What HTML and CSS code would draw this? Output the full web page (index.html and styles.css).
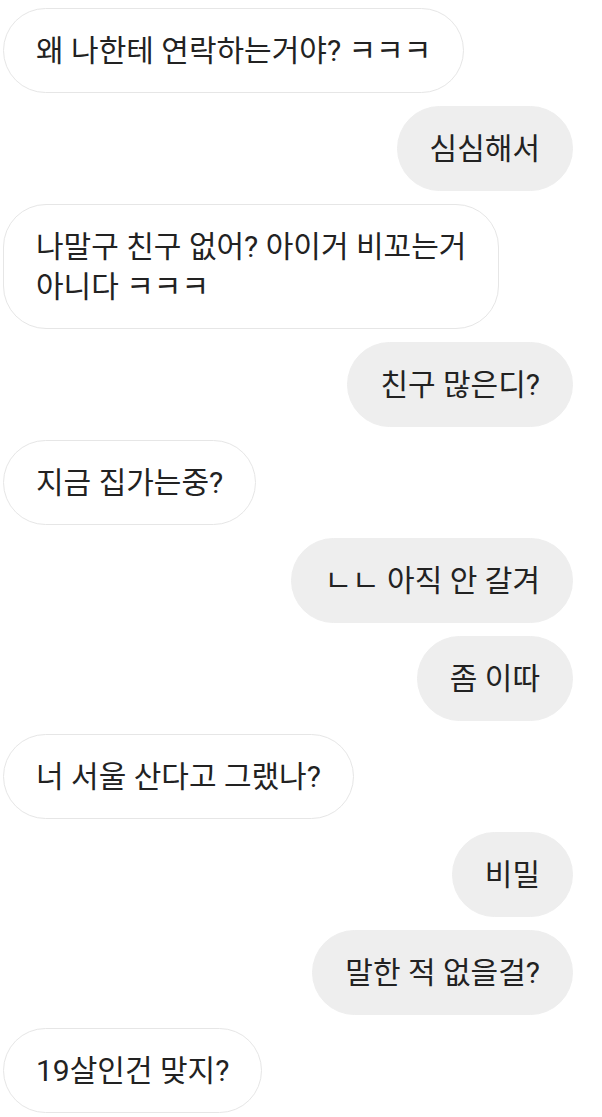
FILE: index.html
```html
<!DOCTYPE html>
<html lang="ko">
<head>
<meta charset="utf-8">
<link rel="stylesheet" href="styles.css">
</head>
<body>
<div class="chat">
  <div class="msg in">왜 나한테 연락하는거야? ㅋㅋㅋ</div>
  <div class="msg out">심심해서</div>
  <div class="msg in">나말구 친구 없어? 아이거 비꼬는거<br>아니다 ㅋㅋㅋ</div>
  <div class="msg out">친구 많은디?</div>
  <div class="msg in">지금 집가는중?</div>
  <div class="msg out">ㄴㄴ 아직 안 갈겨</div>
  <div class="msg out">좀 이따</div>
  <div class="msg in">너 서울 산다고 그랬나?</div>
  <div class="msg out">비밀</div>
  <div class="msg out">말한 적 없을걸?</div>
  <div class="msg in">19살인건 맞지?</div>
</div>
</body>
</html>
```
FILE: styles.css
```css
html, body {
  margin: 0;
  padding: 0;
  background: #ffffff;
}
body {
  font-family: Roboto, "Noto Sans CJK KR", sans-serif;
  color: #222222;
}
.chat {
  display: flex;
  flex-direction: column;
  gap: 13px;
  padding: 8px 29px 0 3px;
}
.msg {
  font-size: 30px;
  line-height: 40px;
  padding: 21.5px 32px;
  border-radius: 43px;
  max-width: 480px;
  box-sizing: content-box;
}
.msg.in {
  align-self: flex-start;
  border: 1px solid #e6e6e6;
  background: #ffffff;
}
.msg.out {
  align-self: flex-end;
  border: 1px solid #eeeeee;
  background: #eeeeee;
}
```
